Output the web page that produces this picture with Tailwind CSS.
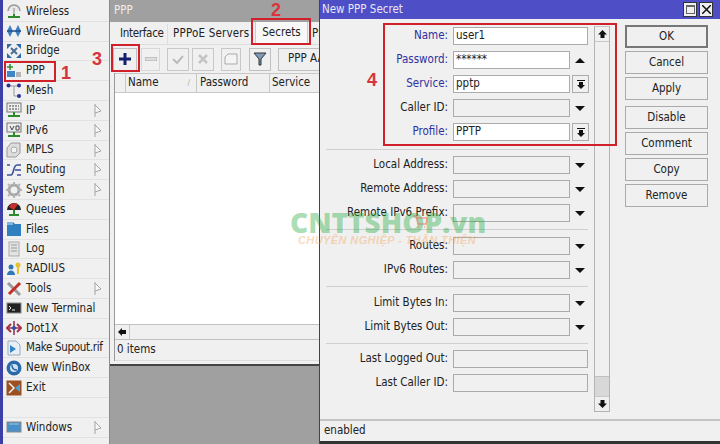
<!DOCTYPE html>
<html lang="en">
<head>
<meta charset="UTF-8">
<title>New PPP Secret</title>
<script src="https://cdn.jsdelivr.net/npm/@tailwindcss/browser@4"></script>
</head>
<body class="w-[720px] h-[444px] overflow-hidden relative font-['DejaVu_Sans_Condensed','Liberation_Sans',sans-serif] text-[11.5px] text-[#222] bg-[#a0a0a0]">
<div class="flex h-[444px]">
  <!-- side menu -->
  <div class="w-[110px] h-full shrink-0 flex bg-[#f0f0f0]">
    <div class="w-[3px] h-full bg-[#3b3fa6]"></div>
    <div class="flex-1 flex flex-col pt-[2px] border-r border-[#8c8c8c] whitespace-nowrap">
      <div class="h-[19.8px] shrink-0 flex items-center gap-[4px] pl-[3px] border-b border-[#e2e2e2]">
        <svg class="w-[16px] h-[16px]" viewBox="0 0 16 16"><path d="M2 8a6 6 0 0 1 12 0" fill="#e8e8e8" stroke="#999" stroke-width="1.5"/><path d="M8 5v9" stroke="#888"/><path d="M2 14h12M8 11v4" stroke="#2d8a2d" stroke-width="2"/></svg><span>Wireless</span></div>
      <div class="h-[19.8px] shrink-0 flex items-center gap-[4px] pl-[3px] border-b border-[#e2e2e2]">
        <svg class="w-[16px] h-[16px]" viewBox="0 0 16 16"><path d="M1 8l3-6 3 6-3 6zM9 8l3-6 3 6-3 6z" fill="#3f7fc4"/><path d="M1 8h14" stroke="#1f4f8f" stroke-width="1.5"/></svg><span>WireGuard</span></div>
      <div class="h-[19.8px] shrink-0 flex items-center gap-[4px] pl-[3px] border-b border-[#e2e2e2]">
        <svg class="w-[16px] h-[16px]" viewBox="0 0 16 16"><path d="M5 5l6 6M11 5l-6 6" stroke="#4a6f96" stroke-width="2"/><path d="M1 1h5L1 6zM15 1h-5l5 5zM1 15h5l-5-5zM15 15h-5l5-5z" fill="#2f6aa8"/></svg><span>Bridge</span></div>
      <div class="h-[19.8px] shrink-0 flex items-center gap-[4px] pl-[3px] border-b border-[#e2e2e2]">
        <svg class="w-[16px] h-[16px]" viewBox="0 0 16 16"><path d="M1 4h6M4 1v6" stroke="#2d8a2d" stroke-width="1.5"/><rect x="1" y="8" width="8" height="6" fill="#3f86c4"/><rect x="10" y="9" width="5" height="5" fill="#b5b5b5"/></svg><span>PPP</span></div>
      <div class="h-[19.8px] shrink-0 flex items-center gap-[4px] pl-[3px] border-b border-[#e2e2e2]">
        <svg class="w-[16px] h-[16px]" viewBox="0 0 16 16"><path d="M8 3v10h5M3 3h10" stroke="#999" fill="none"/><circle cx="2.500" cy="2.500" r="2" fill="#2a2f9a"/><circle cx="13" cy="2.500" r="2" fill="#2a2f9a"/><circle cx="13" cy="13" r="2" fill="#2a2f9a"/></svg><span>Mesh</span></div>
      <div class="h-[19.8px] shrink-0 flex items-center gap-[4px] pl-[3px] border-b border-[#e2e2e2] relative">
        <svg class="w-[16px] h-[16px]" viewBox="0 0 16 16"><rect x="1" y="1" width="14" height="9" fill="#eee" stroke="#777"/><path d="M3 4h10M3 7h10" stroke="#444" stroke-dasharray="2 1"/><path d="M2 14h12M8 10v5" stroke="#2d8a2d" stroke-width="2"/></svg><span>IP</span>
        <svg class="absolute right-[7px] top-[3px] w-[8px] h-[13px]" viewBox="0 0 8 13"><path d="M1 0v13M1 1l6 6-6 2" fill="#f8f8f8" stroke="#a5a5a5"/></svg></div>
      <div class="h-[19.8px] shrink-0 flex items-center gap-[4px] pl-[3px] border-b border-[#e2e2e2] relative">
        <svg class="w-[16px] h-[16px]" viewBox="0 0 16 16"><rect x="1" y="1" width="14" height="9" fill="#eee" stroke="#777"/><path d="M4 4l2 4 2-4M10 4h3v4h-3z" stroke="#444" fill="none"/><path d="M2 14h12M8 10v5" stroke="#2d8a2d" stroke-width="2"/></svg><span>IPv6</span>
        <svg class="absolute right-[7px] top-[3px] w-[8px] h-[13px]" viewBox="0 0 8 13"><path d="M1 0v13M1 1l6 6-6 2" fill="#f8f8f8" stroke="#a5a5a5"/></svg></div>
      <div class="h-[19.8px] shrink-0 flex items-center gap-[4px] pl-[3px] border-b border-[#e2e2e2] relative">
        <svg class="w-[16px] h-[16px]" viewBox="0 0 16 16"><path d="M5 1h9v10l-4 4H1V6z" fill="#ddd" stroke="#999"/><circle cx="8" cy="8" r="3" fill="#f4f4f4" stroke="#aaa"/></svg><span>MPLS</span>
        <svg class="absolute right-[7px] top-[3px] w-[8px] h-[13px]" viewBox="0 0 8 13"><path d="M1 0v13M1 1l6 6-6 2" fill="#f8f8f8" stroke="#a5a5a5"/></svg></div>
      <div class="h-[19.8px] shrink-0 flex items-center gap-[4px] pl-[3px] border-b border-[#e2e2e2] relative">
        <svg class="w-[16px] h-[16px]" viewBox="0 0 16 16"><path d="M1 13h4c3 0 2-10 6-10h4M1 3h3M11 13h4M9 8h6" stroke="#3a4f9a" stroke-width="1.6" fill="none"/></svg><span>Routing</span>
        <svg class="absolute right-[7px] top-[3px] w-[8px] h-[13px]" viewBox="0 0 8 13"><path d="M1 0v13M1 1l6 6-6 2" fill="#f8f8f8" stroke="#a5a5a5"/></svg></div>
      <div class="h-[19.8px] shrink-0 flex items-center gap-[4px] pl-[3px] border-b border-[#e2e2e2] relative">
        <svg class="w-[16px] h-[16px]" viewBox="0 0 16 16"><circle cx="8" cy="8" r="5" fill="none" stroke="#a8a8a8" stroke-width="3"/><path d="M8 0v3M8 13v3M0 8h3M13 8h3M2 2l2 2M12 12l2 2M14 2l-2 2M4 12l-2 2" stroke="#b5b5b5" stroke-width="2"/></svg><span>System</span>
        <svg class="absolute right-[7px] top-[3px] w-[8px] h-[13px]" viewBox="0 0 8 13"><path d="M1 0v13M1 1l6 6-6 2" fill="#f8f8f8" stroke="#a5a5a5"/></svg></div>
      <div class="h-[19.8px] shrink-0 flex items-center gap-[4px] pl-[3px] border-b border-[#e2e2e2]">
        <svg class="w-[16px] h-[16px]" viewBox="0 0 16 16"><path d="M1 9a7 7 0 0 1 14 0z" fill="#222"/><path d="M3 6a6 5 0 0 1 9-3L8 9z" fill="#c9302c"/><path d="M8 9v6M3 14h10" stroke="#2d8a2d" stroke-width="2"/></svg><span>Queues</span></div>
      <div class="h-[19.8px] shrink-0 flex items-center gap-[4px] pl-[3px] border-b border-[#e2e2e2]">
        <svg class="w-[16px] h-[16px]" viewBox="0 0 16 16"><path d="M1 1h6l2 2h6v12H1z" fill="#2f7fc0"/><path d="M1 1h6v3H1z" fill="#7fb5dd"/></svg><span>Files</span></div>
      <div class="h-[19.8px] shrink-0 flex items-center gap-[4px] pl-[3px] border-b border-[#e2e2e2]">
        <svg class="w-[16px] h-[16px]" viewBox="0 0 16 16"><rect x="3" y="1" width="10" height="14" fill="#e4e4e4" stroke="#aaa"/><path d="M5 4h6M5 7h6M5 10h6" stroke="#999"/></svg><span>Log</span></div>
      <div class="h-[19.8px] shrink-0 flex items-center gap-[4px] pl-[3px] border-b border-[#e2e2e2]">
        <svg class="w-[16px] h-[16px]" viewBox="0 0 16 16"><circle cx="5" cy="6" r="2.500" fill="#2f78b8"/><path d="M1 14c0-6 8-6 8 0z" fill="#2f78b8"/><circle cx="12" cy="4" r="2.500" fill="#e6c22e"/><path d="M12 6v7" stroke="#e6c22e" stroke-width="2"/></svg><span>RADIUS</span></div>
      <div class="h-[19.8px] shrink-0 flex items-center gap-[4px] pl-[3px] border-b border-[#e2e2e2] relative">
        <svg class="w-[16px] h-[16px]" viewBox="0 0 16 16"><path d="M2 2l12 12" stroke="#999" stroke-width="3"/><path d="M14 2L3 13" stroke="#c0302c" stroke-width="3"/></svg><span>Tools</span>
        <svg class="absolute right-[7px] top-[3px] w-[8px] h-[13px]" viewBox="0 0 8 13"><path d="M1 0v13M1 1l6 6-6 2" fill="#f8f8f8" stroke="#a5a5a5"/></svg></div>
      <div class="h-[19.8px] shrink-0 flex items-center gap-[4px] pl-[3px] border-b border-[#e2e2e2]">
        <svg class="w-[16px] h-[16px]" viewBox="0 0 16 16"><rect x="1" y="3" width="14" height="10" fill="#222" stroke="#888"/><path d="M3 6l2 2-2 2M6 10h3" stroke="#eee" fill="none"/></svg><span>New Terminal</span></div>
      <div class="h-[19.8px] shrink-0 flex items-center gap-[4px] pl-[3px] border-b border-[#e2e2e2]">
        <svg class="w-[16px] h-[16px]" viewBox="0 0 16 16"><path d="M8 1v14M2 8h12" stroke="#8a3050" stroke-width="1.5"/><path d="M5 4L1 8l4 4M11 4l4 4-4 4" fill="none" stroke="#a83048" stroke-width="2"/><circle cx="8" cy="8" r="2" fill="#3050a0"/></svg><span>Dot1X</span></div>
      <div class="h-[19.8px] shrink-0 flex items-center gap-[4px] pl-[3px] border-b border-[#e2e2e2]">
        <svg class="w-[16px] h-[16px]" viewBox="0 0 16 16"><path d="M2 1h8l4 4v10H2z" fill="#e8f0f6" stroke="#9ab"/><path d="M4 5l6 4-6 4z" fill="#2f86c8"/></svg><span class="tracking-[-0.3px]">Make Supout.rif</span></div>
      <div class="h-[19.8px] shrink-0 flex items-center gap-[4px] pl-[3px] border-b border-[#e2e2e2]">
        <svg class="w-[16px] h-[16px]" viewBox="0 0 16 16"><circle cx="8" cy="8" r="7.500" fill="#2a6aa8"/><circle cx="8" cy="8" r="4" fill="#cfe2f2"/><path d="M6 5c0 4 2 5 5 5" stroke="#2a6aa8" fill="none" stroke-width="1.5"/></svg><span>New WinBox</span></div>
      <div class="h-[19.8px] shrink-0 flex items-center gap-[4px] pl-[3px] border-b border-[#e2e2e2]">
        <svg class="w-[16px] h-[16px]" viewBox="0 0 16 16"><rect x="0.5" y="0.5" width="15" height="15" fill="#9a5020"/><path d="M3 3l5 5-5 5" stroke="#eee" stroke-width="1.5" fill="none"/><path d="M14 4L9 8l5 4z" fill="#4aa0d8"/></svg><span>Exit</span></div>
      <div class="h-[19.8px] shrink-0 border-b border-[#e2e2e2]"></div>
      <div class="h-[19.8px] shrink-0 flex items-center gap-[4px] pl-[3px] border-b border-[#e2e2e2] relative">
        <svg class="w-[16px] h-[16px]" viewBox="0 0 16 16"><rect x="1" y="3" width="14" height="10" fill="#4a90c8" stroke="#888"/><path d="M3 5h10" stroke="#9cc6e6"/></svg><span>Windows</span>
        <svg class="absolute right-[7px] top-[3px] w-[8px] h-[13px]" viewBox="0 0 8 13"><path d="M1 0v13M1 1l6 6-6 2" fill="#f8f8f8" stroke="#a5a5a5"/></svg></div>
    </div>
  </div>

  <!-- PPP window -->
  <div class="w-[209px] h-[366px] shrink-0 flex flex-col bg-[#f0f0f0] border-b-2 border-[#444] overflow-hidden">
    <div class="h-[22px] bg-[#a0a0a0] text-[#eeeeee] pl-[4px] flex items-center shrink-0">PPP</div>
    <div class="flex-1 flex flex-col min-h-0 pl-[3px] pb-[3px]">
      <div class="h-[22px] flex items-end shrink-0 whitespace-nowrap">
        <span class="w-[55px] shrink-0 pl-[7px] h-[20px] flex items-center border-r border-[#ddd] tracking-[-0.3px]">Interface</span>
        <span class="w-[87px] shrink-0 pl-[5px] h-[20px] flex items-center tracking-[0.2px]">PPPoE Servers</span>
        <span class="w-[53px] shrink-0 h-[22px] bg-[#f8f8f8] flex items-center justify-center border-x border-[#ccc]">Secrets</span>
        <span class="pl-[4px] shrink-0 h-[20px] flex items-center">PPP</span>
      </div>
      <div class="h-[29px] flex items-center shrink-0 border-t border-[#ddd] whitespace-nowrap overflow-hidden">
        <div class="w-[24px] h-[23px] shrink-0 border border-[#c0c0c0] flex items-center justify-center">
          <svg class="w-[14px] h-[14px]" viewBox="0 0 14 14"><path d="M7 1v12M1 7h12" stroke="#14206e" stroke-width="3"/></svg></div>
        <div class="w-[19px] h-[23px] shrink-0 ml-[4px] border border-[#d8d8d8] flex items-center justify-center">
          <svg class="w-[12px] h-[4px]" viewBox="0 0 12 4"><rect width="12" height="4" fill="#ddd" stroke="#aaa"/></svg></div>
        <div class="w-[22px] h-[23px] shrink-0 ml-[7px] border border-[#c8c8c8] flex items-center justify-center">
          <svg class="w-[12px] h-[12px]" viewBox="0 0 12 12"><path d="M1 6l4 4 6-7" fill="none" stroke="#bbb" stroke-width="2"/></svg></div>
        <div class="w-[22px] h-[23px] shrink-0 ml-[3px] border border-[#c8c8c8] flex items-center justify-center">
          <svg class="w-[12px] h-[12px]" viewBox="0 0 12 12"><path d="M2 2l8 8M10 2l-8 8" stroke="#c4c4c4" stroke-width="2.5"/></svg></div>
        <div class="w-[20px] h-[23px] shrink-0 ml-[7px] border border-[#c8c8c8] flex items-center justify-center">
          <svg class="w-[14px] h-[12px]" viewBox="0 0 14 12"><path d="M1 11V4l3-3h9v10z" fill="#f4f4f4" stroke="#aaa"/></svg></div>
        <div class="w-[22px] h-[23px] shrink-0 ml-[8px] border border-[#c0c0c0] flex items-center justify-center">
          <svg class="w-[14px] h-[14px]" viewBox="0 0 14 14"><path d="M1 1h12L8 7v6H6V7z" fill="#7b9bb8" stroke="#333"/></svg></div>
        <div class="w-[60px] h-[23px] ml-[7px] border border-[#c0c0c0] flex items-center pl-[9px] shrink-0">PPP AAA</div>
      </div>
      <div class="flex-1 flex flex-col min-h-0 border-l border-[#9a9a9a] ml-[1px]">
        <div class="h-[20px] flex border-y border-[#c8c8c8] shrink-0 whitespace-nowrap">
          <span class="w-[11px] shrink-0 border-r border-[#c8c8c8]"></span>
          <span class="w-[71px] shrink-0 pl-[2px] border-r border-[#c8c8c8] flex items-center justify-between pr-[6px]">Name<span class="text-[#aaa] text-[8px]">∕</span></span>
          <span class="w-[73px] shrink-0 pl-[3px] border-r border-[#c8c8c8] flex items-center">Password</span>
          <span class="pl-[2px] flex items-center">Service</span>
        </div>
        <div class="flex-1 bg-white"></div>
        <div class="h-[16px] flex border-y border-[#c0c0c0] shrink-0">
          <span class="w-[15px] border-r border-[#c8c8c8] flex items-center justify-center">
            <svg class="w-[8px] h-[8px]" viewBox="0 0 8 8"><path d="M0 4l4-4v2h4v4H4v2z" fill="#111"/></svg></span>
        </div>
        <div class="h-[21px] flex items-center pl-[2px] shrink-0 border-b border-[#ddd]">0 items</div>
      </div>
    </div>
  </div>

  <!-- New PPP Secret window -->
  <div class="w-[401px] h-full shrink-0 flex flex-col bg-[#f0f0f0] border-l border-[#444]">
    <div class="h-[19px] bg-[#4e4ec6] text-[#e6e6f5] pl-[2px] flex items-center justify-between shrink-0">
      <span>New PPP Secret</span>
      <div class="flex gap-[2px] pr-[7px]">
        <span class="w-[14px] h-[15px] bg-[#f0f0f0] border border-[#333] flex items-center justify-center"><span class="w-[9px] h-[9px] border border-[#666] border-t-2"></span></span>
        <span class="w-[14px] h-[15px] bg-[#f0f0f0] border border-[#333] flex items-center justify-center">
          <svg class="w-[9px] h-[9px]" viewBox="0 0 9 9"><path d="M0 0l9 9M9 0l-9 9" stroke="#111" stroke-width="1.5"/></svg></span>
      </div>
    </div>
    <div class="flex-1 flex min-h-0 pt-[5px]">
      <!-- form -->
      <div class="w-[274px] pl-[4px] shrink-0 flex flex-col">
        <div class="grid grid-cols-[124px_117px_18px] auto-rows-[24px] gap-x-[5px] items-center h-[120px]">
          <span class="text-right text-[#2f2fa0]">Name:</span><span class="col-span-2 h-[18px] w-[135px] bg-white border border-[#ababab] pl-[2px] flex items-center">user1</span>
          <span class="text-right text-[#2f2fa0]">Password:</span><span class="h-[18px] bg-white border border-[#ababab] pl-[2px] flex items-center">******</span><svg class="w-[10px] h-[5px]" viewBox="0 0 10 5"><path d="M5 0l5 5H0z" fill="#111"/></svg>
          <span class="text-right text-[#2f2fa0]">Service:</span><span class="h-[18px] bg-white border border-[#ababab] pl-[2px] flex items-center">pptp</span><span class="w-[17px] h-[18px] ml-[-3px] border border-[#ababab] flex items-center justify-center"><svg class="w-[8px] h-[9px]" viewBox="0 0 8 9"><path d="M0 0h8v1H0zM2 2h4v3h2L4 9 0 5h2z" fill="#111"/></svg></span>
          <span class="text-right">Caller ID:</span><span class="h-[18px] border border-[#ababab]"></span><svg class="w-[10px] h-[5px]" viewBox="0 0 10 5"><path d="M0 0h10L5 5z" fill="#111"/></svg>
          <span class="text-right text-[#2f2fa0]">Profile:</span><span class="h-[18px] bg-white border border-[#ababab] pl-[2px] flex items-center">PPTP</span><span class="w-[17px] h-[18px] ml-[-3px] border border-[#ababab] flex items-center justify-center"><svg class="w-[8px] h-[9px]" viewBox="0 0 8 9"><path d="M0 0h8v1H0zM2 2h4v3h2L4 9 0 5h2z" fill="#111"/></svg></span>
        </div>
        <div class="h-px w-[262px] ml-[2px] bg-[#cfcfcf] mt-[5px] mb-[3px]"></div>
        <div class="grid grid-cols-[124px_117px_18px] auto-rows-[24px] gap-x-[5px] items-center">
          <span class="text-right">Local Address:</span><span class="h-[18px] border border-[#ababab]"></span><svg class="w-[10px] h-[5px]" viewBox="0 0 10 5"><path d="M0 0h10L5 5z" fill="#111"/></svg>
          <span class="text-right">Remote Address:</span><span class="h-[18px] border border-[#ababab]"></span><svg class="w-[10px] h-[5px]" viewBox="0 0 10 5"><path d="M0 0h10L5 5z" fill="#111"/></svg>
          <span class="text-right">Remote IPv6 Prefix:</span><span class="h-[18px] border border-[#ababab]"></span><svg class="w-[10px] h-[5px]" viewBox="0 0 10 5"><path d="M0 0h10L5 5z" fill="#111"/></svg>
        </div>
        <div class="h-px w-[262px] ml-[2px] bg-[#cfcfcf] mt-[4px] mb-[4px]"></div>
        <div class="grid grid-cols-[124px_117px_18px] auto-rows-[24px] gap-x-[5px] items-center">
          <span class="text-right">Routes:</span><span class="h-[18px] border border-[#ababab]"></span><svg class="w-[10px] h-[5px]" viewBox="0 0 10 5"><path d="M0 0h10L5 5z" fill="#111"/></svg>
          <span class="text-right">IPv6 Routes:</span><span class="h-[18px] border border-[#ababab]"></span><svg class="w-[10px] h-[5px]" viewBox="0 0 10 5"><path d="M0 0h10L5 5z" fill="#111"/></svg>
        </div>
        <div class="h-px w-[262px] ml-[2px] bg-[#cfcfcf] mt-[4px] mb-[4px]"></div>
        <div class="grid grid-cols-[124px_117px_18px] auto-rows-[24px] gap-x-[5px] items-center">
          <span class="text-right">Limit Bytes In:</span><span class="h-[18px] border border-[#ababab]"></span><svg class="w-[10px] h-[5px]" viewBox="0 0 10 5"><path d="M0 0h10L5 5z" fill="#111"/></svg>
          <span class="text-right">Limit Bytes Out:</span><span class="h-[18px] border border-[#ababab]"></span><svg class="w-[10px] h-[5px]" viewBox="0 0 10 5"><path d="M0 0h10L5 5z" fill="#111"/></svg>
        </div>
        <div class="h-px w-[262px] ml-[2px] bg-[#cfcfcf] mt-[4px] mb-[3px]"></div>
        <div class="grid grid-cols-[124px_135px] auto-rows-[24px] gap-x-[5px] items-center">
          <span class="text-right">Last Logged Out:</span><span class="h-[18px] border border-[#ababab]"></span>
          <span class="text-right">Last Caller ID:</span><span class="h-[18px] border border-[#ababab]"></span>
        </div>
      </div>
      <!-- scrollbar -->
      <div class="w-[16px] h-[386px] mt-[2px] shrink-0 flex flex-col border-x border-b border-[#b4b4b4]">
        <span class="h-[16px] border-y border-[#c8c8c8] flex items-center justify-center"><svg class="w-[9px] h-[8px]" viewBox="0 0 9 8"><path d="M4.500 0L9 4.500H6.500V8h-4V4.500H0z" fill="#111"/></svg></span>
        <span class="flex-1"></span>
        <span class="h-[20px] bg-[#d8d8d8] border-t border-[#c0c0c0]"></span>
        <span class="h-[15px] flex items-center justify-center border-t border-[#c8c8c8]"><svg class="w-[9px] h-[8px]" viewBox="0 0 9 8"><path d="M4.500 8L9 3.500H6.500V0h-4v3.500H0z" fill="#111"/></svg></span>
      </div>
      <!-- buttons -->
      <div class="flex flex-col mt-[1px] ml-[15px] w-[83px] shrink-0 text-center">
        <span class="h-[23px] border-2 border-[#777] flex items-center justify-center">OK</span>
        <span class="h-[23px] mt-[3px] border border-[#aaa] flex items-center justify-center">Cancel</span>
        <span class="h-[23px] mt-[3px] border border-[#aaa] flex items-center justify-center">Apply</span>
        <span class="h-[23px] mt-[6px] border border-[#aaa] flex items-center justify-center">Disable</span>
        <span class="h-[23px] mt-[3px] border border-[#aaa] flex items-center justify-center">Comment</span>
        <span class="h-[23px] mt-[3px] border border-[#aaa] flex items-center justify-center">Copy</span>
        <span class="h-[23px] mt-[3px] border border-[#aaa] flex items-center justify-center">Remove</span>
      </div>
    </div>
    <div class="h-[22px] border-t-2 border-[#c4c4c4] pl-[4px] flex items-center shrink-0">enabled</div>
    <div class="h-[3px] bg-[#333] shrink-0"></div>
  </div>
</div>

<!-- tutorial marks drawn over the screenshot -->
<div class="absolute left-[4px] top-[61px] w-[52px] h-[21px] border-[2px] border-[#d0202a]"></div>
<div class="absolute left-[251px] top-[18px] w-[60px] h-[27px] border-[2px] border-[#d0202a]"></div>
<div class="absolute left-[111px] top-[44px] w-[29px] h-[28px] border-[2px] border-[#d0202a]"></div>
<div class="absolute left-[383px] top-[23px] w-[234px] h-[123px] border-[2px] border-[#d0202a]"></div>
<span class="absolute left-[61px] top-[62px] text-[18px] font-bold font-['Liberation_Sans',sans-serif] leading-[22px] text-[#d8343a]">1</span>
<span class="absolute left-[271px] top-[0px] text-[18px] font-bold font-['Liberation_Sans',sans-serif] leading-[20px] text-[#d8343a]">2</span>
<span class="absolute left-[92px] top-[48px] text-[18px] font-bold font-['Liberation_Sans',sans-serif] leading-[22px] text-[#d8343a]">3</span>
<span class="absolute left-[367px] top-[69px] text-[18px] font-bold font-['Liberation_Sans',sans-serif] leading-[22px] text-[#d8343a]">4</span>
<span class="absolute left-[290px] top-[206px] text-[28px] font-extrabold leading-[32px] text-[#1fa83a]/40 font-['Open_Sans',sans-serif] whitespace-nowrap">CNTTSHOP.vn</span>
<svg class="absolute left-[412px] top-[215px] w-[16px] h-[14px]" viewBox="0 0 16 14"><path d="M1 1h3l2 8h8l1-6H5M6 12h1M12 12h1" fill="none" stroke="#e87060" stroke-opacity="0.6" stroke-width="1.5"/></svg>
<span class="absolute left-[298px] top-[233px] text-[11px] italic font-semibold leading-[14px] text-[#f0a050]/40 tracking-[0.4px] whitespace-nowrap font-['Liberation_Sans',sans-serif]">CHUYÊN NGHIỆP - THÂN THIỆN</span>
</body>
</html>
